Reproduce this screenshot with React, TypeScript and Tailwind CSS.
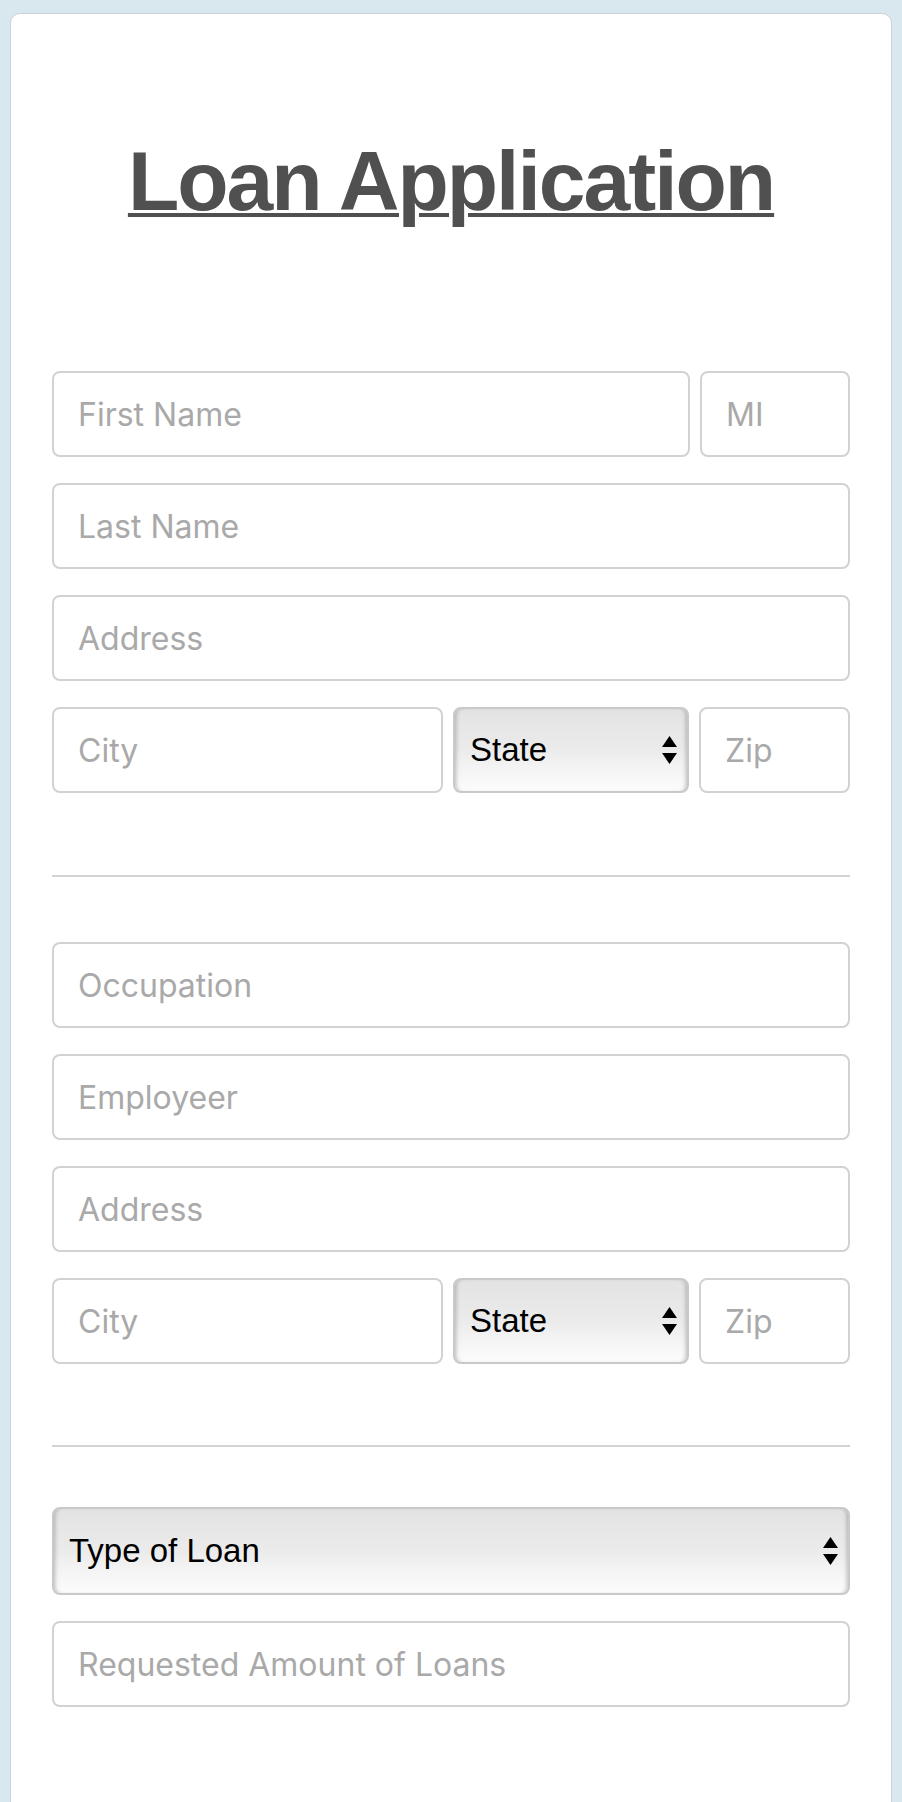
import { useState } from "react"

const inputClass =
  "h-[86px] min-w-0 rounded-[8px] border-2 border-[#d2d2d2] bg-white px-[24px] font-['Inter',sans-serif] text-[32px] text-[#333] outline-none placeholder:text-[#a9a9a9]"

function Field({ placeholder, className = "w-full" }: { placeholder: string; className?: string }) {
  return <input type="text" placeholder={placeholder} className={`${inputClass} ${className}`} />
}

// up/down arrows of the mac-style select
function Arrows() {
  return (
    <svg
      width="15"
      height="28"
      viewBox="0 0 15 28"
      className="pointer-events-none absolute right-[12px] top-1/2 -translate-y-1/2"
    >
      <polygon points="7.5,0 15,11 0,11" fill="#000" />
      <polygon points="0,17 15,17 7.5,28" fill="#000" />
    </svg>
  )
}

function Select({ label, options, className = "" }: { label: string; options: string[]; className?: string }) {
  const [value, setValue] = useState("")
  return (
    <div className={`relative ${className}`}>
      <select
        value={value}
        onChange={(e) => setValue(e.target.value)}
        className="h-full w-full appearance-none rounded-[8px] border-2 border-[#c9c9c9] bg-[linear-gradient(to_bottom,#e3e3e3_0%,#ebebeb_50%,#f3f3f3_70%,#fcfcfc_100%)] pl-[15px] pr-[36px] font-['Liberation_Sans',Arial,sans-serif] text-[33px] text-black shadow-[inset_4px_0_4px_-3px_rgba(0,0,0,0.25),inset_-4px_0_4px_-3px_rgba(0,0,0,0.25)] outline-none"
      >
        <option value="">{label}</option>
        {options.map((o) => (
          <option key={o} value={o}>
            {o}
          </option>
        ))}
      </select>
      <Arrows />
    </div>
  )
}

const states = ["AL", "AK", "AZ", "CA", "CO", "FL", "GA", "NY", "TX", "WA"]

function AddressBlock() {
  return (
    <div className="flex gap-[10px]">
      <Field placeholder="City" className="flex-1" />
      <Select label="State" options={states} className="h-[86px] w-[236px] shrink-0" />
      <Field placeholder="Zip" className="w-[151px] shrink-0" />
    </div>
  )
}

export default function App() {
  return (
    <div className="h-[1802px] overflow-hidden bg-[#d9e8ef] px-[10px] pt-[13px]">
      <div className="min-h-[1900px] rounded-[10px] border border-[#ccd1db] bg-white px-[41px]">
        <h1 className="mt-[125px] text-center font-['Liberation_Sans',Arial,sans-serif] text-[84px] font-bold leading-[84px] tracking-[-2px] text-[#505050] underline decoration-4 underline-offset-[3px]">
          Loan Application
        </h1>

        <form className="mt-[148px]" onSubmit={(e) => e.preventDefault()}>
          {/* personal */}
          <div className="flex flex-col gap-[26px]">
            <div className="flex gap-[10px]">
              <Field placeholder="First Name" className="flex-1" />
              <Field placeholder="MI" className="w-[150px] shrink-0" />
            </div>
            <Field placeholder="Last Name" />
            <Field placeholder="Address" />
            <AddressBlock />
          </div>

          <hr className="mt-[82px] mb-[65px] border-t-2 border-[#d3d3d3]" />

          {/* employment */}
          <div className="flex flex-col gap-[26px]">
            <Field placeholder="Occupation" />
            <Field placeholder="Employeer" />
            <Field placeholder="Address" />
            <AddressBlock />
          </div>

          <hr className="mt-[81px] mb-[60px] border-t-2 border-[#d3d3d3]" />

          {/* loan */}
          <div className="flex flex-col gap-[26px]">
            <Select
              label="Type of Loan"
              options={["Personal", "Auto", "Mortgage", "Student", "Business"]}
              className="h-[88px]"
            />
            <Field placeholder="Requested Amount of Loans" />
          </div>
        </form>
      </div>
    </div>
  )
}
